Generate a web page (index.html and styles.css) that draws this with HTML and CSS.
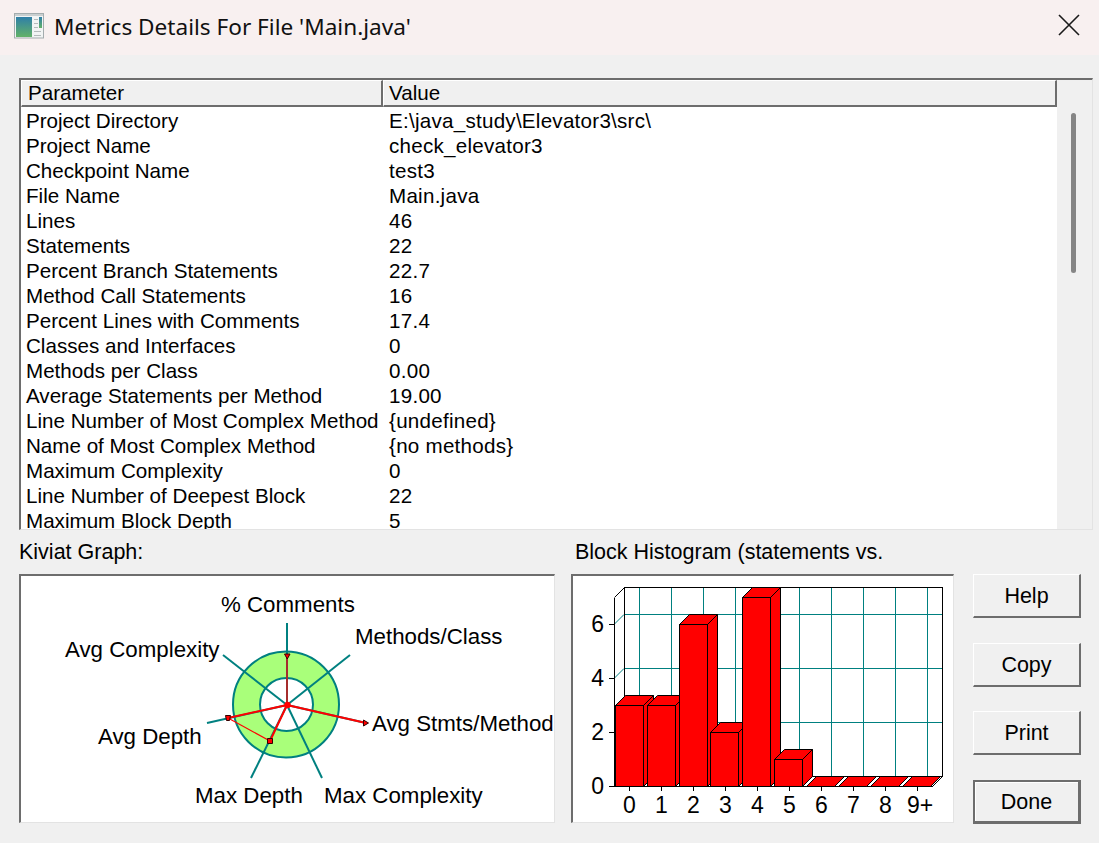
FILE: index.html
```html
<!DOCTYPE html>
<html lang="en">
<head>
<meta charset="utf-8">
<title>Metrics Details For File 'Main.java'</title>
<link rel="stylesheet" href="styles.css">
</head>
<body>
<div class="window">
  <header class="titlebar">
    <svg class="app-icon" viewBox="0 0 30 26" width="30" height="26">
      <defs>
        <linearGradient id="ig" x1="0" y1="0" x2="0" y2="1">
          <stop offset="0" stop-color="#2f7fa8"/>
          <stop offset="1" stop-color="#62b268"/>
        </linearGradient>
      </defs>
      <rect x="0.5" y="0.5" width="29" height="24.5" fill="#f2f4f4" stroke="#a4acae"/>
      <rect x="1" y="1" width="28" height="2" fill="#c9cfd0"/>
      <rect x="2" y="4" width="16" height="20" fill="url(#ig)"/>
      <path d="M20 6.500h4M20 10.500h4M20 14.500h4M20 18.500h7M20 22.500h7" stroke="#b4babb" fill="none"/>
      <rect x="25" y="4" width="3" height="11" fill="url(#ig)"/>
    </svg>
    <h1 class="title">Metrics Details For File 'Main.java'</h1>
    <svg class="close" viewBox="0 0 22 22" width="22" height="22">
      <path d="M1 1L21 21M21 1L1 21" stroke="#1a1a1a" stroke-width="1.6" fill="none"/>
    </svg>
  </header>
  <main class="content">
    <section class="listview">
      <div class="list-main">
        <div class="list-head">
          <div class="head-cell head-param">Parameter</div>
          <div class="head-cell head-value">Value</div>
        </div>
        <table class="rows">
          <tr><td>Project Directory</td><td>E:\java_study\Elevator3\src\</td></tr>
          <tr><td>Project Name</td><td>check_elevator3</td></tr>
          <tr><td>Checkpoint Name</td><td>test3</td></tr>
          <tr><td>File Name</td><td>Main.java</td></tr>
          <tr><td>Lines</td><td>46</td></tr>
          <tr><td>Statements</td><td>22</td></tr>
          <tr><td>Percent Branch Statements</td><td>22.7</td></tr>
          <tr><td>Method Call Statements</td><td>16</td></tr>
          <tr><td>Percent Lines with Comments</td><td>17.4</td></tr>
          <tr><td>Classes and Interfaces</td><td>0</td></tr>
          <tr><td>Methods per Class</td><td>0.00</td></tr>
          <tr><td>Average Statements per Method</td><td>19.00</td></tr>
          <tr><td>Line Number of Most Complex Method</td><td>{undefined}</td></tr>
          <tr><td>Name of Most Complex Method</td><td>{no methods}</td></tr>
          <tr><td>Maximum Complexity</td><td>0</td></tr>
          <tr><td>Line Number of Deepest Block</td><td>22</td></tr>
          <tr><td>Maximum Block Depth</td><td>5</td></tr>
        </table>
      </div>
      <div class="scrollbar"><div class="thumb"></div></div>
    </section>
    <section class="lower">
      <div class="chart-col kiviat-col">
        <div class="caption">Kiviat Graph:</div>
        <div class="panel">
          <svg class="chart" viewBox="21 576 533 246" width="533" height="246">
            <g class="chart-text kiviat-text">
              <text x="221" y="612">% Comments</text>
              <text x="355" y="644">Methods/Class</text>
              <text x="65" y="657">Avg Complexity</text>
              <text x="372" y="731">Avg Stmts/Method</text>
              <text x="98" y="744">Avg Depth</text>
              <text x="195" y="803">Max Depth</text>
              <text x="324" y="803">Max Complexity</text>
            </g>
            <circle cx="286" cy="704.5" r="53" fill="#a9ff7a" stroke="#008080" stroke-width="2"/>
            <circle cx="286.5" cy="704.5" r="26.5" fill="#fff" stroke="#008080" stroke-width="2"/>
            <g stroke="#008080" stroke-width="2" fill="none">
              <path d="M287 705L287 623"/>
              <path d="M287 705L350 655"/>
              <path d="M287 705L223 655"/>
              <path d="M287 705L366 723"/>
              <path d="M287 705L207 723"/>
              <path d="M287 705L251 778"/>
              <path d="M287 705L322 778"/>
            </g>
            <g stroke="#f00" fill="none">
              <path d="M287 705L287 655" stroke-width="1.3"/>
              <path d="M287 705L366 723" stroke-width="2"/>
              <path d="M287 705L228 718" stroke-width="2"/>
              <path d="M287 705L270 741" stroke-width="2"/>
              <path d="M228 718L270 741" stroke-width="1.2"/>
            </g>
            <circle cx="287.500" cy="705" r="3.200" fill="#f00"/>
            <g fill="#f00" stroke="#300" stroke-width="1">
              <path d="M284.500 654h5.500l-2.750 5z"/>
              <path d="M363.500 720l5 3l-5 3z"/>
              <path d="M225.500 715.500h5l-1 5h-3z"/>
              <path d="M267.500 738.500h5v5h-5z"/>
            </g>
          </svg>
        </div>
      </div>
      <div class="chart-col hist-col">
        <div class="caption caption-hist">Block Histogram (statements vs.</div>
        <div class="panel">
          <svg class="chart" viewBox="573 576 380 246" width="380" height="246" shape-rendering="crispEdges">
            <g stroke="#008080" fill="none" stroke-width="1">
              <path d="M639.500 587V776M671.500 587V776M703.500 587V776M735.500 587V776M767.500 587V776M799.500 587V776M831.500 587V776M863.500 587V776M895.500 587V776M927.500 587V776"/>
              <path d="M624 614.500H943M624 668.500H943M624 722.500H943"/>
              <path shape-rendering="auto" d="M614 624.500L624 614.500M614 678.500L624 668.500M614 732.500L624 722.500"/>
            </g>
            <g stroke="#000" fill="none" stroke-width="1">
              <path d="M624.500 776.500V587.500H942.500V776.500H624.500"/>
              <path d="M614.500 786.500V597.500"/>
              <path shape-rendering="auto" d="M614.500 597.500L624.500 587.500M614.500 786.500L624.500 776.500M932.500 786.500L942.500 776.500"/>
              <path d="M609 786.500H932.500M609 732.500H614M609 678.500H614M609 624.500H614"/>
              <path d="M629.500 786V791M661.500 786V791M693.500 786V791M725.500 786V791M757.500 786V791M789.500 786V791M821.500 786V791M853.500 786V791M885.500 786V791M917.500 786V791"/>
            </g>
            <g fill="#f00" stroke="#000" stroke-width="1" shape-rendering="auto">
              <path d="M643.500 705.500L653.500 695.500V776.500L643.500 786.500Z"/>
              <path d="M615.500 705.500L625.500 695.500H653.500L643.500 705.500Z"/>
              <rect x="615.500" y="705.500" width="28" height="81"/>
              <path d="M675.500 705.500L685.500 695.500V776.500L675.500 786.500Z"/>
              <path d="M647.500 705.500L657.500 695.500H685.500L675.500 705.500Z"/>
              <rect x="647.500" y="705.500" width="28" height="81"/>
              <path d="M707.500 624.500L717.500 614.500V776.500L707.500 786.500Z"/>
              <path d="M679.500 624.500L689.500 614.500H717.500L707.500 624.500Z"/>
              <rect x="679.500" y="624.500" width="28" height="162"/>
              <path d="M738.500 732.500L748.500 722.500V776.500L738.500 786.500Z"/>
              <path d="M710.500 732.500L720.500 722.500H748.500L738.500 732.500Z"/>
              <rect x="710.500" y="732.500" width="28" height="54"/>
              <path d="M770.500 597.500L780.500 587.500V776.500L770.500 786.500Z"/>
              <path d="M742.500 597.500L752.500 587.500H780.500L770.500 597.500Z"/>
              <rect x="742.500" y="597.500" width="28" height="189"/>
              <path d="M802.500 759.500L812.500 749.500V776.500L802.500 786.500Z"/>
              <path d="M774.500 759.500L784.500 749.500H812.500L802.500 759.500Z"/>
              <rect x="774.500" y="759.500" width="28" height="27"/>
              <path d="M806.500 786.500L816.500 776.500H844.500L834.500 786.500Z"/>
              <path d="M838.500 786.500L848.500 776.500H876.500L866.500 786.500Z"/>
              <path d="M870.500 786.500L880.500 776.500H908.500L898.500 786.500Z"/>
              <path d="M902.500 786.500L912.500 776.500H940.500L930.500 786.500Z"/>
            </g>
            <g class="chart-text" shape-rendering="auto">
              <text class="end" x="604" y="632">6</text>
              <text class="end" x="604" y="686">4</text>
              <text class="end" x="604" y="740">2</text>
              <text class="end" x="604" y="794">0</text>
              <text class="mid" x="629.500" y="813">0</text>
              <text class="mid" x="661.500" y="813">1</text>
              <text class="mid" x="693.500" y="813">2</text>
              <text class="mid" x="725.500" y="813">3</text>
              <text class="mid" x="757.500" y="813">4</text>
              <text class="mid" x="789.500" y="813">5</text>
              <text class="mid" x="821.500" y="813">6</text>
              <text class="mid" x="853.500" y="813">7</text>
              <text class="mid" x="885.500" y="813">8</text>
              <text class="mid" x="920" y="813">9+</text>
            </g>
          </svg>
        </div>
      </div>
      <div class="buttons">
        <button class="btn" type="button">Help</button>
        <button class="btn" type="button">Copy</button>
        <button class="btn" type="button">Print</button>
        <button class="btn btn-default" type="button">Done</button>
      </div>
    </section>
  </main>
</div>
</body>
</html>
```
FILE: styles.css
```css
* { box-sizing: border-box; }
html, body { margin: 0; padding: 0; }
body {
  width: 1099px;
  height: 843px;
  overflow: hidden;
  background: #f0f0f0;
  color: #000;
  font-family: "Liberation Sans", Arial, sans-serif;
  font-size: 20.6px;
}
.window { width: 1099px; height: 843px; display: flex; flex-direction: column; background: #f0f0f0; }
.titlebar {
  height: 55px;
  flex: none;
  display: flex;
  align-items: center;
  padding: 0 19px 0 14px;
  background: #f8f0f0;
}
.app-icon { flex: none; margin-top: -4px; }
.title {
  margin: -2px 0 0 10px;
  flex: 1;
  font-family: "Noto Sans", sans-serif;
  font-weight: 400;
  font-size: 22.6px;
  color: #111;
}
.close { flex: none; margin-top: -5px; }
.content { flex: 1; padding: 23px 0 0 19px; display: flex; flex-direction: column; }
.listview {
  width: 1074px;
  height: 452px;
  flex: none;
  display: flex;
  border-top: 2px solid #6d6d6d;
  border-left: 2px solid #6d6d6d;
  border-right: 1px solid #e3e3e3;
  border-bottom: 1px solid #e3e3e3;
  overflow: hidden;
}
.list-main { width: 1036px; flex: none; background: #fff; overflow: hidden; }
.list-head { display: flex; height: 27px; background: #f0f0f0; }
.head-cell {
  height: 27px;
  line-height: 23px;
  background: #f0f0f0;
  border-top: 1px solid #fff;
  border-left: 1px solid #fff;
  border-right: 2px solid #6d6d6d;
  border-bottom: 2px solid #6d6d6d;
}
.head-param { width: 362px; padding-left: 6px; }
.head-value { flex: 1; padding-left: 5px; }
.rows { border-collapse: collapse; margin-top: 1px; }
.rows td { height: 25px; padding: 0; line-height: 25px; white-space: nowrap; }
.rows td:first-child { width: 368px; padding-left: 5px; }
.rows td:last-child { letter-spacing: 0.25px; }
.scrollbar { flex: 1; background: #f0f0f0; position: relative; }
.thumb {
  position: absolute;
  left: 14px;
  top: 33px;
  width: 5px;
  height: 160px;
  border-radius: 3px;
  background: #858585;
}
.lower { display: flex; flex: none; }
.chart-col { display: flex; flex-direction: column; flex: none; }
.kiviat-col { width: 536px; }
.hist-col { width: 383px; margin-left: 16px; }
.caption { height: 44px; line-height: 45px; font-size: 21.5px; }
.caption-hist { padding-left: 4px; }
.panel {
  height: 249px;
  background: #fff;
  border-top: 2px solid #6d6d6d;
  border-left: 2px solid #6d6d6d;
  border-right: 1px solid #e3e3e3;
  border-bottom: 1px solid #e3e3e3;
}
.chart { display: block; }
.chart-text text { font-family: "Liberation Sans", Arial, sans-serif; font-size: 23px; fill: #000; }
.chart-text.kiviat-text text { font-size: 22.3px; }
.chart-text .end { text-anchor: end; }
.chart-text .mid { text-anchor: middle; }
.buttons {
  width: 108px;
  height: 250px;
  margin: 44px 0 0 19px;
  display: flex;
  flex-direction: column;
  justify-content: space-between;
  flex: none;
}
.btn {
  width: 108px;
  height: 44px;
  padding: 2px 0 0;
  font-family: inherit;
  font-size: 21.5px;
  color: #000;
  background: #f0f0f0;
  border-top: 1px solid #fff;
  border-left: 1px solid #fff;
  border-right: 2px solid #6d6d6d;
  border-bottom: 2px solid #6d6d6d;
}
.btn-default {
  border: 2px solid #6d6d6d;
  border-right-width: 3px;
  border-bottom-width: 3px;
  box-shadow: inset 1px 1px 0 #fff;
}
```
